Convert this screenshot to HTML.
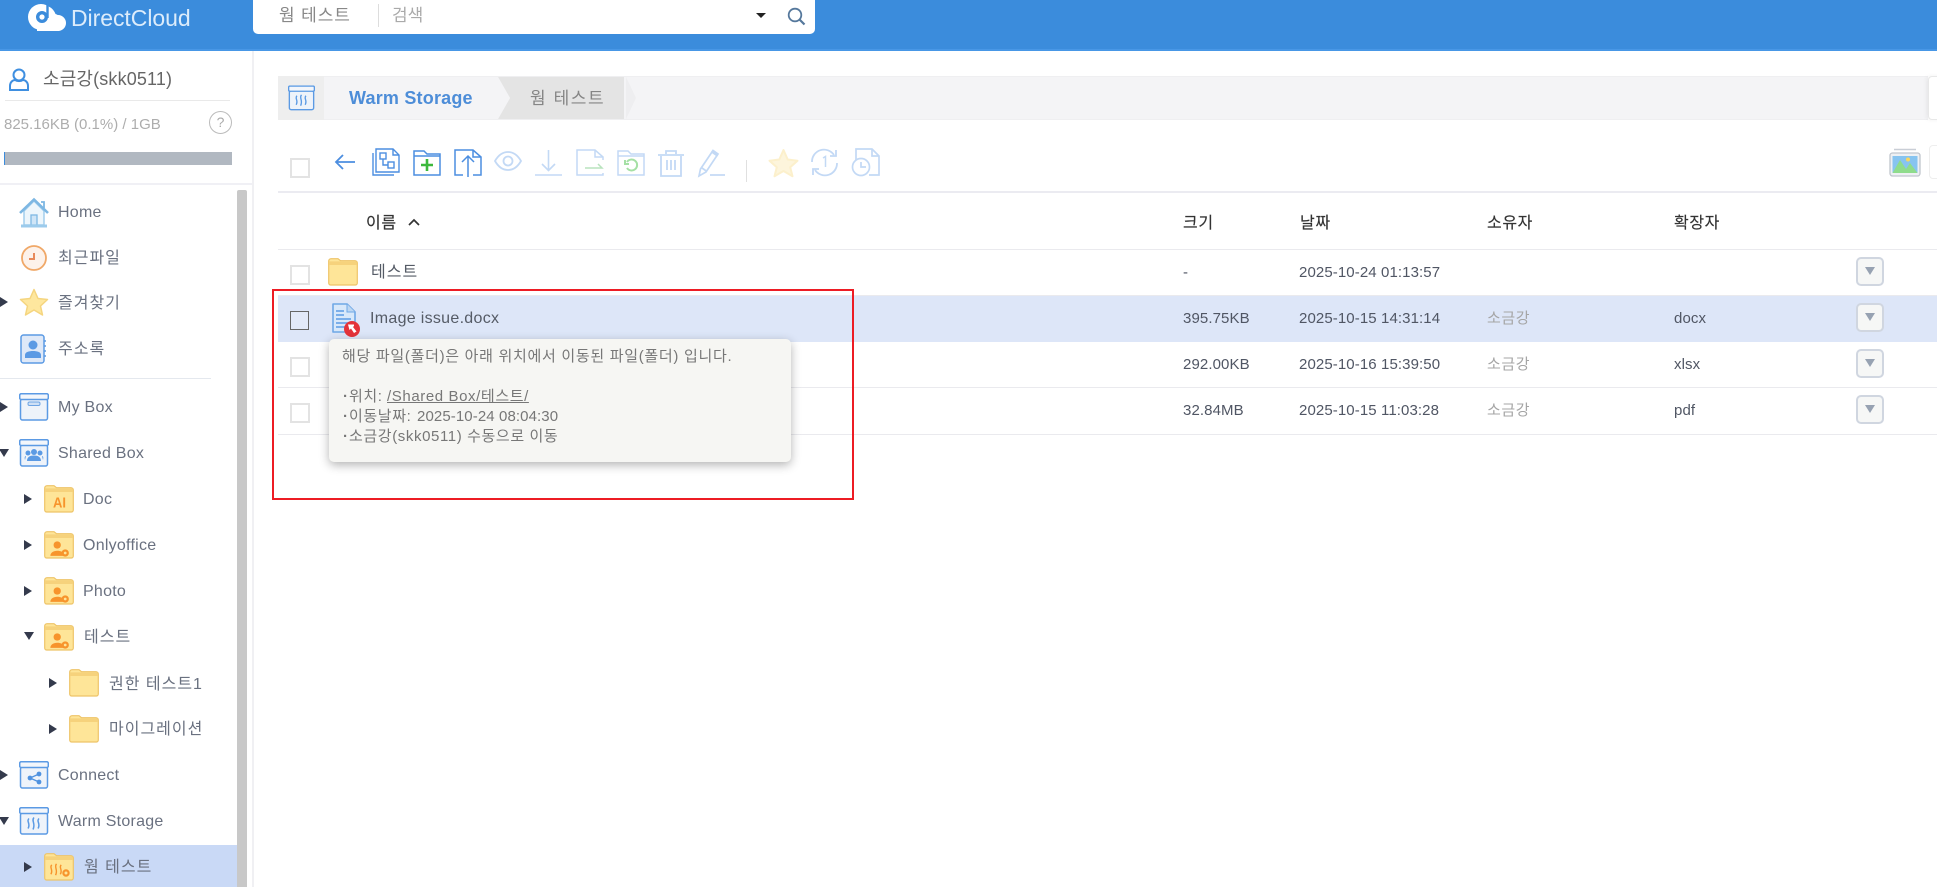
<!DOCTYPE html>
<html lang="ko"><head><meta charset="utf-8"><title>DirectCloud</title>
<style>
html,body{margin:0;padding:0;width:1937px;height:887px;overflow:hidden;background:#fff}
body{position:relative;font-family:"Liberation Sans","Noto Sans CJK KR",sans-serif;font-size:16px;color:#666d78}
.a{position:absolute}
.t{position:absolute;white-space:nowrap;line-height:20px;height:20px}
.s{font-size:16px;letter-spacing:.25px;color:#6a7180}
.k{letter-spacing:1px}
.c{font-size:15px;letter-spacing:.1px;color:#505664}
.h{font-size:16px;letter-spacing:.6px;color:#333;-webkit-text-stroke:.15px #333}
.o{font-size:15px;letter-spacing:.6px;color:#a5a5a5}
.m{font-size:15px;letter-spacing:.6px;color:#777}
.b{font-size:15px;font-weight:bold;color:#777}
svg{position:absolute;overflow:visible}
.cb{position:absolute;left:290px;width:16px;height:16px;border:2px solid #e3e3e3;background:#fff}
.tr{position:absolute;width:0;height:0;border-style:solid;border-color:transparent}
.r{border-width:5px 0 5px 8px;border-left-color:#343a4c}
.d{border-width:8px 5px 0 5px;border-top-color:#343a4c}
.l{position:absolute;left:278px;right:0;height:1px;background:#eaeaee}
.btn{position:absolute;left:1856px;width:24px;height:25px;border:2px solid #d0d6e0;border-radius:5px;background:#f6f7f6}
.btn:after{content:"";position:absolute;left:7px;top:8px;border-style:solid;border-width:8px 5px 0 5px;border-color:#97a2b2 transparent transparent transparent}
</style></head><body>
<svg width="0" height="0" style="position:absolute">
<defs>
<symbol id="folder" viewBox="0 0 30 28"><path d="M.7 3a2.300 2.300 0 0 1 2.300-2.300h7l2.500 2h14.500a2.300 2.300 0 0 1 2.300 2.300V25a2 2 0 0 1-2 2H2.700a2 2 0 0 1-2-2z" fill="#fee598" stroke="#eec468" stroke-width="1.200"/><path d="M1.300 3.400h27.400V7H1.300z" fill="#f6d27c"/></symbol>
<symbol id="box" viewBox="0 0 30 28"><rect x="1.500" y="6" width="27" height="21" rx="2" fill="#eef3fa" stroke="#5b9ae4" stroke-width="1.500"/><rect x=".7" y=".7" width="28.600" height="5.800" rx="1.500" fill="#f3f6fb" stroke="#5b9ae4" stroke-width="1.500"/></symbol>
<symbol id="wave" viewBox="0 0 18 14"><path d="M4 1c-3 3 2 5-1 10M9 0C6 3.500 11 6 8 12M14 1c-3 3 2 5-1 10" fill="none" stroke="currentColor" stroke-width="1.500"/></symbol>
<symbol id="person" viewBox="0 0 16 14"><circle cx="6" cy="3.500" r="3.200" fill="#f7942c"/><path d="M0 13c0-3 3-4.500 6-4.500s5 1 5.500 2.500V13z" fill="#f7942c"/><circle cx="13" cy="10.500" r="2.200" fill="none" stroke="#f7942c" stroke-width="2"/></symbol>
</defs></svg>

<!-- header -->
<div class="a" style="left:0;top:0;width:1937px;height:51px;background:#3b8cdc"></div>
<div class="a" style="left:0;top:49px;width:1937px;height:2px;background:#4897e6"></div>
<svg style="left:28px;top:2px" width="38" height="30" viewBox="0 0 38 30"><circle cx="13" cy="15" r="13" fill="#fff"/><rect x="9" y="19" width="22" height="10" fill="#fff"/><circle cx="30" cy="21" r="8" fill="#fff"/><path d="M19 4c4 1 7 4 8.500 8 2 .5 3 1.500 4 3L20 20z" fill="#fff"/><circle cx="14" cy="15" r="4.300" fill="#fff" stroke="#3b8cdc" stroke-width="3.400"/><path d="M19.500 0v16" stroke="#3b8cdc" stroke-width="2.400"/></svg>
<div class="t" style="left:71px;top:8px;font-size:23px;color:#dcecfb;letter-spacing:-.05px">DirectCloud</div>
<div class="a" style="left:253px;top:0;width:562px;height:34px;background:#fff;border-radius:0 0 5px 5px"></div>
<div class="t" style="left:279px;top:6px;font-size:17px;color:#888;letter-spacing:.9px">웜 테스트</div>
<div class="a" style="left:378px;top:4px;width:1px;height:23px;background:#ddd"></div>
<div class="t" style="left:392px;top:6px;font-size:17px;color:#aaa">검색</div>
<div class="tr" style="left:756px;top:13px;border-width:5px 5px 0 5px;border-top-color:#222"></div>
<svg style="left:787px;top:7px" width="20" height="20" viewBox="0 0 20 20"><circle cx="8" cy="8" r="6.300" fill="none" stroke="#55789c" stroke-width="1.800"/><path d="M12.500 12.500l5 5" stroke="#55789c" stroke-width="2.200"/></svg>

<!-- sidebar -->
<div class="a" style="left:252px;top:51px;width:2px;height:836px;background:#f0f0f3"></div>
<svg style="left:9px;top:68px" width="20" height="23" viewBox="0 0 20 23"><circle cx="10" cy="7" r="5.500" fill="none" stroke="#3f8fe0" stroke-width="2"/><path d="M1 22v-4c0-4 3-6 5-6 2 1.500 6 1.500 8 0 2 0 5 2 5 6v4z" fill="none" stroke="#3f8fe0" stroke-width="2"/></svg>
<div class="t" style="left:43px;top:69px;font-size:18px;color:#666;letter-spacing:.15px">소금강(skk0511)</div>
<div class="a" style="left:5px;top:100px;width:225px;height:1px;background:#e9e9e9"></div>
<div class="t" style="left:4px;top:115px;font-size:15px;color:#adadad">825.16KB (0.1%) / 1GB</div>
<div class="a" style="left:209px;top:111px;width:21px;height:21px;border:1px solid #bbb;border-radius:50%;text-align:center;line-height:20px;font-size:14px;color:#aaa">?</div>
<div class="a" style="left:4px;top:152px;width:228px;height:13px;background:#b1b8c1;border-left:1px solid #3b8cdc;box-sizing:border-box"></div>
<div class="a" style="left:0;top:183px;width:252px;height:2px;background:#f0f0f5"></div>
<div class="a" style="left:237px;top:190px;width:10px;height:697px;background:#c8c8c8;border-radius:2px 2px 0 0"></div>
<div class="a" style="left:0;top:845px;width:237px;height:42px;background:#c9d9f6"></div>

<svg style="left:19px;top:198px" width="30" height="30" viewBox="0 0 30 30"><path d="M5 13v14h20V13L15 3z" fill="#edf6fc" stroke="#9ccbec" stroke-width="1.400"/><path d="M1 15L15 1.500 29 15" fill="none" stroke="#7db7e3" stroke-width="2.600"/><path d="M22 4h3v6" fill="none" stroke="#7db7e3" stroke-width="1.800"/><rect x="12" y="17" width="6" height="10" fill="#cfe5f7" stroke="#7db7e3" stroke-width="1.300"/><rect x="2" y="26.500" width="26" height="3" fill="#9ccbec"/></svg>
<div class="t s" style="left:58px;top:203px">Home</div>
<svg style="left:21px;top:245px" width="26" height="26" viewBox="0 0 26 26"><circle cx="13" cy="13" r="12" fill="#fdf2ea" stroke="#f0a868" stroke-width="1.800"/><path d="M13 8v6H8" fill="none" stroke="#e8895a" stroke-width="2"/></svg>
<div class="t s k" style="left:58px;top:249px">최근파일</div>
<div class="tr r" style="left:0;top:297px"></div>
<svg style="left:19px;top:288px" width="30" height="28" viewBox="0 0 30 28"><path d="M15 1.500l4 9 9.500 1-7 6.500 2 9-8.500-5-8.500 5 2-9-7-6.500 9.500-1z" fill="#fee79e" stroke="#f5d57f" stroke-width="1.500" stroke-linejoin="round"/></svg>
<div class="t s k" style="left:58px;top:294px">즐겨찾기</div>
<svg style="left:20px;top:334px" width="27" height="30" viewBox="0 0 27 30"><rect x="1" y="1" width="23" height="28" rx="2.500" fill="#dfe9f8" stroke="#5b9ae4" stroke-width="1.500"/><circle cx="13" cy="11" r="4.500" fill="#5b9ae4"/><path d="M5 24v-3c0-3 4-4 8-4s8 1 8 4v3z" fill="#5b9ae4"/><path d="M24 7h2M24 12h2M24 17h2M24 22h2" stroke="#5b9ae4" stroke-width="1.500"/></svg>
<div class="t s k" style="left:58px;top:340px">주소록</div>
<div class="a" style="left:0;top:378px;width:211px;height:1px;background:#e4e8ee"></div>

<div class="tr r" style="left:0;top:402px"></div>
<svg style="left:19px;top:393px" width="30" height="28"><use href="#box" width="30" height="28"/><rect x="9" y="9" width="12" height="3.500" rx="1.500" fill="#cfe0f5" stroke="#6ea4e4"/></svg>
<div class="t s" style="left:58px;top:398px">My Box</div>

<div class="tr d" style="left:-1px;top:449px"></div>
<svg style="left:19px;top:439px" width="30" height="28"><use href="#box" width="30" height="28"/><circle cx="15" cy="13" r="3" fill="#5b9ae4"/><circle cx="9" cy="14" r="2.500" fill="#5b9ae4"/><circle cx="21" cy="14" r="2.500" fill="#5b9ae4"/><path d="M8 22c0-4 3-5.500 7-5.500s7 1.500 7 5.500zM6 21c-.5-2-.5-4 1-4M24 21c.5-2 .5-4-1-4" fill="#5b9ae4"/></svg>
<div class="t s" style="left:58px;top:444px">Shared Box</div>

<div class="tr r" style="left:24px;top:494px"></div>
<svg style="left:44px;top:485px" width="30" height="28"><use href="#folder" width="30" height="28"/><text x="9" y="22.500" font-family="Liberation Sans" font-size="15" font-weight="bold" fill="#f7942c" textLength="13" lengthAdjust="spacingAndGlyphs">AI</text></svg>
<div class="t s" style="left:83px;top:490px">Doc</div>

<div class="tr r" style="left:24px;top:540px"></div>
<svg style="left:44px;top:531px" width="30" height="28"><use href="#folder" width="30" height="28"/><use href="#person" x="6" y="10" width="19" height="16"/></svg>
<div class="t s" style="left:83px;top:536px">Onlyoffice</div>

<div class="tr r" style="left:24px;top:586px"></div>
<svg style="left:44px;top:577px" width="30" height="28"><use href="#folder" width="30" height="28"/><use href="#person" x="6" y="10" width="19" height="16"/></svg>
<div class="t s" style="left:83px;top:582px">Photo</div>

<div class="tr d" style="left:24px;top:632px"></div>
<svg style="left:44px;top:623px" width="30" height="28"><use href="#folder" width="30" height="28"/><use href="#person" x="6" y="10" width="19" height="16"/></svg>
<div class="t s k" style="left:84px;top:628px">테스트</div>

<div class="tr r" style="left:49px;top:678px"></div>
<svg style="left:69px;top:669px" width="30" height="28"><use href="#folder" width="30" height="28"/></svg>
<div class="t s k" style="left:109px;top:675px">권한 테스트1</div>

<div class="tr r" style="left:49px;top:724px"></div>
<svg style="left:69px;top:715px" width="30" height="28"><use href="#folder" width="30" height="28"/></svg>
<div class="t s k" style="left:109px;top:720px">마이그레이션</div>

<div class="tr r" style="left:0;top:770px"></div>
<svg style="left:19px;top:761px" width="30" height="28"><use href="#box" width="30" height="28"/><path d="M20 13l-9 4 9 4" fill="none" stroke="#4f92e0" stroke-width="1.300"/><circle cx="20" cy="13" r="2.400" fill="#4f92e0"/><circle cx="11" cy="17" r="2.400" fill="#4f92e0"/><circle cx="20" cy="21" r="2.400" fill="#4f92e0"/></svg>
<div class="t s" style="left:58px;top:766px">Connect</div>

<div class="tr d" style="left:-1px;top:817px"></div>
<svg style="left:19px;top:807px;color:#5b9ae4" width="30" height="28"><use href="#box" width="30" height="28"/><use href="#wave" x="6" y="10" width="18" height="15"/></svg>
<div class="t s" style="left:58px;top:812px">Warm Storage</div>

<div class="tr r" style="left:24px;top:862px"></div>
<svg style="left:44px;top:853px;color:#f7942c" width="30" height="28"><use href="#folder" width="30" height="28"/><use href="#wave" x="4" y="10" width="17" height="15"/><circle cx="22" cy="20" r="2.600" fill="none" stroke="#f7942c" stroke-width="2.200"/></svg>
<div class="t s k" style="left:84px;top:858px">웜 테스트</div>

<!-- breadcrumb -->
<div class="a" style="left:278px;top:76px;width:1650px;height:44px;background:#f4f4f6;border-top:1px solid #efeff1;border-bottom:1px solid #efeff1;box-sizing:border-box"></div>
<div class="a" style="left:278px;top:76px;width:46px;height:44px;background:#eeeeee"></div>
<svg style="left:288px;top:85px;color:#5b9ae4" width="27" height="26" viewBox="0 0 30 28"><use href="#box" width="30" height="28"/><use href="#wave" x="6" y="10" width="18" height="15"/></svg>
<div class="t" style="left:349px;top:88px;font-size:18px;font-weight:bold;color:#4d8dd8;letter-spacing:.2px">Warm Storage</div>
<svg style="left:498px;top:76px" width="140" height="44" viewBox="0 0 140 44"><path d="M0 1h126v42H0l12-21z" fill="#e4e4e4"/><path d="M0 1l12 21L0 43z" fill="#f4f4f6"/><path d="M128 1l10 21-10 21z" fill="#eeeef0"/></svg>
<div class="t" style="left:530px;top:89px;font-size:17px;color:#858585;letter-spacing:1.600px">웜 테스트</div>
<div class="a" style="left:1928px;top:76px;width:20px;height:44px;background:#fff;border:1px solid #e8e8e8;border-radius:4px;box-sizing:border-box;box-shadow:-2px 0 4px rgba(0,0,0,.05)"></div>

<!-- toolbar -->
<div class="cb" style="top:158px"></div>
<svg style="left:334px;top:153px" width="22" height="18" viewBox="0 0 22 18"><path d="M21 9H2M9 2L2 9l7 7" fill="none" stroke="#4c8ee0" stroke-width="1.800"/></svg>
<svg style="left:372px;top:148px" width="28" height="28" viewBox="0 0 28 28" fill="none" stroke="#4c8ee0" stroke-width="1.400"><path d="M1 5v22h21"/><path d="M4 1h17l6 6v17H4z"/><path d="M21 1v6h6"/><rect x="8" y="5" width="6" height="6"/><rect x="16" y="14" width="6" height="6"/><path d="M11 11v6h5"/></svg>
<svg style="left:413px;top:149px" width="28" height="27" viewBox="0 0 28 27" fill="none" stroke="#4c8ee0" stroke-width="1.500"><path d="M1 2h10l3 3h13v21H1z"/><path d="M1 7h26"/><path d="M14 10v12M8 16h12" stroke="#3cb83c" stroke-width="2.600"/></svg>
<svg style="left:454px;top:149px" width="28" height="28" viewBox="0 0 28 28" fill="none" stroke="#4c8ee0" stroke-width="1.500"><path d="M9 26H1V1h18l8 7v18h-8"/><path d="M19 1v7h8"/><path d="M14 28V7M8 13l6-6 6 6"/></svg>
<svg style="left:494px;top:150px" width="28" height="22" viewBox="0 0 28 22" fill="none" stroke="#c3d9f5" stroke-width="1.800"><path d="M1 11C5 4 10 2 14 2s9 2 13 9c-4 7-9 9-13 9S5 18 1 11z"/><circle cx="14" cy="11" r="4.500"/></svg>
<svg style="left:535px;top:149px" width="27" height="27" viewBox="0 0 27 27" fill="none" stroke="#c3d9f5" stroke-width="1.600"><path d="M13.500 1v20M7 15l6.500 6.500L20 15"/><path d="M0 26h27"/></svg>
<svg style="left:576px;top:149px" width="28" height="27" viewBox="0 0 28 27" fill="none" stroke="#c3d9f5" stroke-width="1.500"><path d="M27 24v2H1V1h18l8 7v3"/><path d="M19 1v7h8"/><path d="M9 19h17l-4-4" stroke="#b8e3bd"/></svg>
<svg style="left:617px;top:149px" width="28" height="27" viewBox="0 0 28 27" fill="none" stroke="#c3d9f5" stroke-width="1.500"><path d="M1 2h10l3 3h13v21H1z"/><path d="M1 7h26"/><path d="M10 13a5.500 5.500 0 1 1 0 6M8 11v4h4" stroke="#a5e0a5" stroke-width="2"/></svg>
<svg style="left:657px;top:149px" width="28" height="28" viewBox="0 0 28 28" fill="none" stroke="#c3d9f5" stroke-width="1.800"><path d="M1 6h26M9 5V2h10v3"/><path d="M4 7v20h20V7"/><path d="M10 11v10M14 11v10M18 11v10"/></svg>
<svg style="left:698px;top:149px" width="28" height="28" viewBox="0 0 28 28" fill="none" stroke="#c3d9f5" stroke-width="1.700"><path d="M1 27l1.500-7L14 3l5 3.500L8 23z"/><path d="M15 1.500l5 3.500-1 1.500-5-3.500z" fill="#c3d9f5"/><path d="M4 19l5 3.500"/><path d="M12 26h15"/></svg>
<div class="a" style="left:746px;top:160px;width:1px;height:22px;background:#e0e0e0"></div>
<svg style="left:767px;top:147px" width="33" height="31" viewBox="0 0 33 31"><path d="M16.500 3l4.200 9.500 9.800 1.200-7.300 6.500 2.300 9-9-5.200-9 5.200 2.300-9-7.300-6.500 9.800-1.200z" fill="#fdf5dc" stroke="#fcf0cc" stroke-width="2" stroke-linejoin="round"/></svg>
<svg style="left:810px;top:149px" width="29" height="27" viewBox="0 0 29 27" fill="none" stroke="#c3d9f5" stroke-width="1.800"><path d="M2 13A12 12 0 0 1 24 6M27 14A12 12 0 0 1 5 21"/><path d="M26 1v6h-6M3 26v-6h6"/><path d="M13 9l2.500-1.500V18" stroke-width="1.500"/></svg>
<svg style="left:851px;top:148px" width="29" height="29" viewBox="0 0 29 29" fill="none" stroke="#c3d9f5" stroke-width="1.700"><path d="M5 12V1h16l7 7v19H18"/><path d="M21 1v7h7"/><circle cx="10" cy="19" r="8.500"/><path d="M10 14v5h5"/></svg>
<svg style="left:1889px;top:148px" width="32" height="29" viewBox="0 0 32 29"><path d="M5 1.500h22" stroke="#c9ced6" stroke-width="1.500"/><rect x="1" y="5" width="30" height="23" rx="2.500" fill="#eef0f3" stroke="#c0c5cd" stroke-width="1.300"/><rect x="3.500" y="8" width="25" height="17" fill="#87c4f0"/><path d="M3.500 25l7.500-13 6 9 4-6 7.500 10z" fill="#8fdc8c"/><circle cx="19" cy="11.500" r="2" fill="#f9d75f"/></svg>
<div class="a" style="left:1929px;top:145px;width:20px;height:34px;border:1px solid #eee;border-radius:4px;box-sizing:border-box"></div>
<div class="a" style="left:278px;top:191px;right:0;height:2px;background:#ebebf1"></div>

<!-- table header -->
<div class="t h" style="left:366px;top:214px">이름</div>
<svg style="left:408px;top:218px" width="12" height="8" viewBox="0 0 12 8"><path d="M1 7l5-5 5 5" fill="none" stroke="#333" stroke-width="1.700"/></svg>
<div class="t h" style="left:1183px;top:214px">크기</div>
<div class="t h" style="left:1300px;top:214px">날짜</div>
<div class="t h" style="left:1487px;top:214px">소유자</div>
<div class="t h" style="left:1674px;top:214px">확장자</div>
<div class="l" style="top:249px"></div>

<!-- rows -->
<div class="a" style="left:278px;top:296px;right:0;height:46px;background:#dde6f8"></div>
<div class="l" style="top:295px"></div>
<div class="l" style="top:387px"></div>
<div class="l" style="top:434px"></div>

<div class="cb" style="top:265px"></div>
<svg style="left:328px;top:258px" width="30" height="28"><use href="#folder" width="30" height="28"/></svg>
<div class="t" style="left:371px;top:263px;font-size:16px;color:#555b66;letter-spacing:1px">테스트</div>
<div class="t c" style="left:1183px;top:263px">-</div>
<div class="t c" style="left:1299px;top:263px">2025-10-24 01:13:57</div>
<div class="btn" style="top:257px"></div>

<div class="cb" style="top:311px;border:1.500px solid #666;background:#e2e9f8;width:17px;height:17px"></div>
<svg style="left:331px;top:302px" width="30" height="36" viewBox="0 0 30 36"><path d="M2 2h14l8 8v20H2z" fill="#d8e8fa" stroke="#6fa8e6" stroke-width="1.600" stroke-linejoin="round"/><path d="M16 2v8h8" fill="#bcd6f2" stroke="#6fa8e6"/><path d="M5 9h8M5 13h8M5 17h15M5 21h15M5 25h10" stroke="#5b9ae4" stroke-width="1.500"/><circle cx="21" cy="27" r="8" fill="#e4333a"/><path d="M17 22.500h6v1.500l-1 1 3.500 4.500-2.500 1.500-3-4.500-1.500 1.500z" fill="#fff"/></svg>
<div class="t" style="left:370px;top:309px;font-size:16px;letter-spacing:.3px;color:#555b66">Image issue.docx</div>
<div class="t c" style="left:1183px;top:309px">395.75KB</div>
<div class="t c" style="left:1299px;top:309px">2025-10-15 14:31:14</div>
<div class="t o" style="left:1487px;top:309px">소금강</div>
<div class="t c" style="left:1674px;top:309px">docx</div>
<div class="btn" style="top:303px"></div>

<div class="cb" style="top:357px"></div>
<div class="t c" style="left:1183px;top:355px">292.00KB</div>
<div class="t c" style="left:1299px;top:355px">2025-10-16 15:39:50</div>
<div class="t o" style="left:1487px;top:355px">소금강</div>
<div class="t c" style="left:1674px;top:355px">xlsx</div>
<div class="btn" style="top:349px"></div>

<div class="cb" style="top:403px"></div>
<div class="t c" style="left:1183px;top:401px">32.84MB</div>
<div class="t c" style="left:1299px;top:401px">2025-10-15 11:03:28</div>
<div class="t o" style="left:1487px;top:401px">소금강</div>
<div class="t c" style="left:1674px;top:401px">pdf</div>
<div class="btn" style="top:395px"></div>

<!-- tooltip -->
<div class="a" style="left:329px;top:339px;width:462px;height:123px;background:#f6f6f3;border-radius:5px;box-shadow:0 3px 10px rgba(0,0,0,.3)"></div>
<div class="t m" style="left:342px;top:347px;letter-spacing:.7px">해당 파일(폴더)은 아래 위치에서 이동된 파일(폴더) 입니다.</div>
<div class="t b" style="left:343px;top:387px">·</div>
<div class="t m" style="left:349px;top:387px">위치:</div>
<div class="t m" style="left:387px;top:387px"><u>/Shared Box/테스트/</u></div>
<div class="t b" style="left:343px;top:407px">·</div>
<div class="t m" style="left:349px;top:407px">이동날짜:</div>
<div class="t m" style="left:417px;top:407px;letter-spacing:.1px">2025-10-24 08:04:30</div>
<div class="t b" style="left:343px;top:427px">·</div>
<div class="t m" style="left:349px;top:427px">소금강(skk0511) 수동으로 이동</div>

<!-- red annotation -->
<div class="a" style="left:272px;top:289px;width:582px;height:211px;border:2px solid #ed1c24;box-sizing:border-box"></div>
</body></html>
